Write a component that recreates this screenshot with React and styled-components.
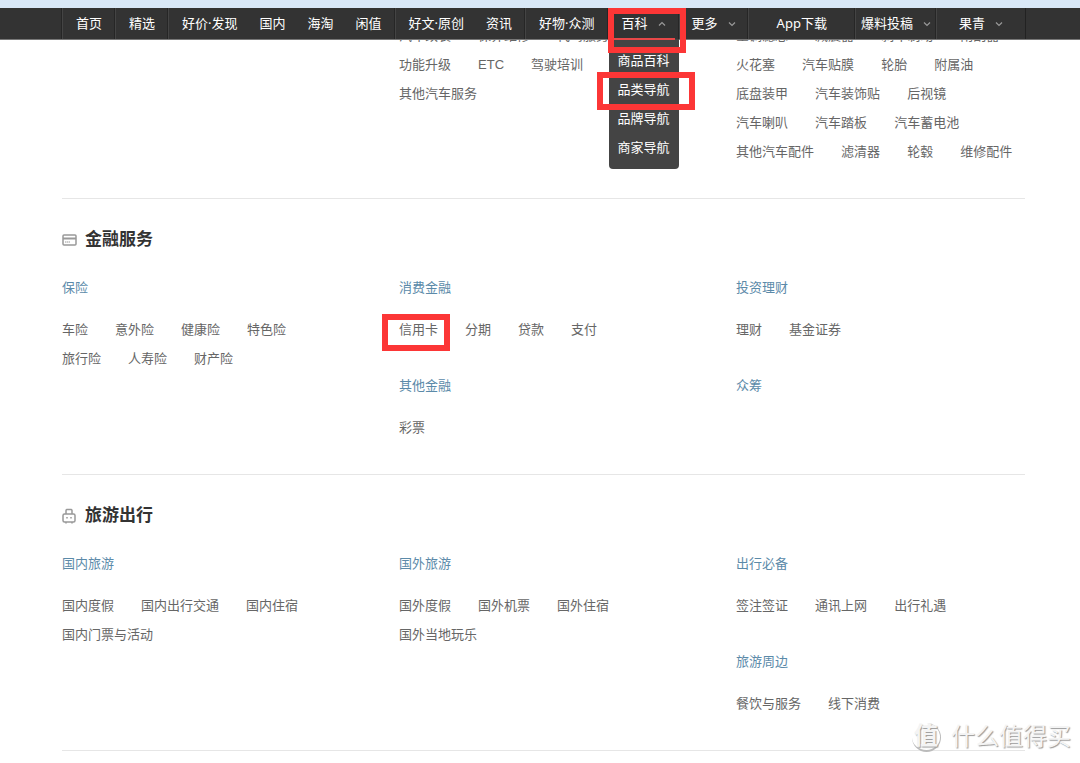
import React from 'react';
import styled, { createGlobalStyle } from 'styled-components';

const mainNav = [
  [{ label: '首页' }],
  [{ label: '精选' }],
  [{ label: '好价·发现' }, { label: '国内' }, { label: '海淘' }, { label: '闲值' }],
  [{ label: '好文·原创' }, { label: '资讯' }],
  [{ label: '好物·众测' }],
];

const wikiMenu = [
  { label: '商品百科' },
  { label: '品类导航', marked: true },
  { label: '品牌导航' },
  { label: '商家导航' },
];

const carColumns = [
  [],
  [{ rows: [['汽车改装', '保养维修', '代驾服务'], ['功能升级', 'ETC', '驾驶培训'], ['其他汽车服务']] }],
  [{
    rows: [
      ['空调滤芯', '减震器', '刹车制动', '雨刮器'],
      ['火花塞', '汽车贴膜', '轮胎', '附属油'],
      ['底盘装甲', '汽车装饰贴', '后视镜'],
      ['汽车喇叭', '汽车踏板', '汽车蓄电池'],
      ['其他汽车配件', '滤清器', '轮毂', '维修配件'],
    ],
  }],
];

const financeColumns = [
  [{ name: '保险', rows: [['车险', '意外险', '健康险', '特色险'], ['旅行险', '人寿险', '财产险']] }],
  [
    { name: '消费金融', rows: [['信用卡', '分期', '贷款', '支付']] },
    { name: '其他金融', rows: [['彩票']] },
  ],
  [
    { name: '投资理财', rows: [['理财', '基金证券']] },
    { name: '众筹', rows: [] },
  ],
];

const travelColumns = [
  [{ name: '国内旅游', rows: [['国内度假', '国内出行交通', '国内住宿'], ['国内门票与活动']] }],
  [{ name: '国外旅游', rows: [['国外度假', '国外机票', '国外住宿'], ['国外当地玩乐']] }],
  [
    { name: '出行必备', rows: [['签注签证', '通讯上网', '出行礼遇']] },
    { name: '旅游周边', rows: [['餐饮与服务', '线下消费']] },
  ],
];

const Chevron = ({ up }) => (
  <ChevronIcon viewBox="0 0 8 6" aria-hidden="true">
    <path d={up ? 'M1 4.5 L4 1.5 L7 4.5' : 'M1 1.5 L4 4.5 L7 1.5'} />
  </ChevronIcon>
);

const CardIcon = () => (
  <TitleIcon viewBox="0 0 15 16" aria-hidden="true">
    <rect x="1" y="3" width="13" height="10" rx="1" />
    <path d="M1 6.5 H14" strokeWidth="2" />
    <path d="M3 10 H4.5 M5 10 H6.5 M7 10 H8" strokeWidth="1" />
  </TitleIcon>
);

const LuggageIcon = () => (
  <TitleIcon viewBox="0 0 15 16" aria-hidden="true">
    <path d="M4 6 V2.5 Q4 1.5 5 1.5 H9 Q10 1.5 10 2.5 V6" />
    <rect x="1" y="6" width="12" height="8" rx="1.5" />
    <path d="M5 9 V10.5 M9 9 V10.5 M4 14 V15.5 M10 14 V15.5" />
  </TitleIcon>
);

const Columns = ({ columns }) => (
  <ColumnGrid>
    {columns.map((blocks, i) => (
      <div key={i}>
        {blocks.map((block, j) => (
          <Block key={j}>
            {block.name && <BlockTitle><a href="#">{block.name}</a></BlockTitle>}
            {block.rows.map((row) => (
              <LinkRow key={row[0]}>
                {row.map((label) => (
                  <LinkItem key={label}>
                    <a href="#">{label}</a>
                    {label === '信用卡' && <CardMark />}
                  </LinkItem>
                ))}
              </LinkRow>
            ))}
          </Block>
        ))}
      </div>
    ))}
  </ColumnGrid>
);

const App = () => (
  <Page>
    <GlobalStyle />
    <Header>
      <NavBar>
        {mainNav.map((group) => (
          <NavGroup key={group[0].label}>
            {group.map((item) => <NavLink key={item.label} href="#">{item.label}</NavLink>)}
          </NavGroup>
        ))}
        <WikiGroup>
          <NavLink href="#">百科<Chevron up /></NavLink>
          <Dropdown>
            {wikiMenu.map((item) => (
              <DropdownItem key={item.label}>
                <a href="#">{item.label}</a>
                {item.marked && <MenuMark />}
              </DropdownItem>
            ))}
          </Dropdown>
          <ActiveLine />
          <TabMark />
        </WikiGroup>
        <NavGroup $pad={12}><NavLink href="#">更多<Chevron /></NavLink></NavGroup>
        <NavGroup $pad={28}><NavLink href="#">App下载</NavLink></NavGroup>
        <NavGroup $pad={5}><NavLink href="#">爆料投稿<Chevron /></NavLink></NavGroup>
        <NavGroup $pad={22} $last><NavLink href="#">果青<Chevron /></NavLink></NavGroup>
      </NavBar>
    </Header>

    <Main>
      <Section>
        <Columns columns={carColumns} />
      </Section>
      <Section>
        <SectionTitle><CardIcon />金融服务</SectionTitle>
        <Columns columns={financeColumns} />
      </Section>
      <Section>
        <SectionTitle><LuggageIcon />旅游出行</SectionTitle>
        <Columns columns={travelColumns} />
      </Section>
    </Main>

    <Watermark>
      <WatermarkLogo>值</WatermarkLogo>
      什么值得买
    </Watermark>
  </Page>
);

const GlobalStyle = createGlobalStyle`
  * {
    box-sizing: border-box;
  }

  body {
    margin: 0;
    background-color: white;
    color: #666;
    font: 13px/29px "Liberation Sans", "Noto Sans CJK SC", sans-serif;
  }

  a {
    color: inherit;
    text-decoration: none;
  }

  ul {
    margin: 0;
    padding: 0;
    list-style: none;
  }
`;

const Page = styled.div`
  position: relative;
  min-height: 100vh;
`;

const Header = styled.header`
  position: relative;
  z-index: 2;
  padding: 0 55px 0 62px;
  background-color: #333;
  border-top: 8px solid #d9e8f7;
  border-bottom: 1px solid #777;
`;

const NavBar = styled.nav`
  display: flex;
  height: 31px;
  color: white;
  font-family: "Noto Sans", "Noto Sans CJK SC", sans-serif;
  white-space: nowrap;
`;

const NavGroup = styled.div`
  display: flex;
  align-items: center;
  gap: 22px;
  padding: 0 ${({ $pad = 13 }) => $pad}px;
  border-left: 1px solid #444;
  border-right: ${({ $last }) => ($last ? '1px solid #222' : 'none')};
  box-shadow: -1px 0 #262626;
`;

const WikiGroup = styled(NavGroup)`
  position: relative;
`;

const NavLink = styled.a`
  display: flex;
  align-items: center;
  gap: 10px;
`;

const ChevronIcon = styled.svg`
  width: 8px;
  height: 6px;
  fill: none;
  stroke: #999;
  stroke-width: 1.2;
`;

const Dropdown = styled.ul`
  position: absolute;
  top: 100%;
  left: 0;
  width: 100%;
  padding: 7px 0;
  background-color: #444;
  border-radius: 0 0 4px 4px;
  text-align: center;
`;

const DropdownItem = styled.li`
  position: relative;
`;

const ActiveLine = styled.div`
  position: absolute;
  left: 4px;
  right: 4px;
  bottom: -1px;
  height: 2px;
  background-color: #e84848;
`;

const Mark = styled.span`
  position: absolute;
  border: 6px solid #fc3636;
  pointer-events: none;
`;

const TabMark = styled(Mark)`
  inset: 0 -7px -14px -1px;
`;

const MenuMark = styled(Mark)`
  inset: -3px -16px -6px -12px;
`;

const CardMark = styled(Mark)`
  inset: -1px -12px -7px -17px;
`;

/* the page is scrolled, so the first row of links runs under the header */
const Main = styled.main`
  margin: -19px 55px 0 62px;
`;

const Section = styled.section`
  padding-bottom: 2px;
  border-bottom: 1px solid #e6e6e6;
`;

const SectionTitle = styled.h2`
  display: flex;
  align-items: center;
  gap: 8px;
  margin: 0 0 22px;
  padding-top: 27px;
  color: #333;
  font-size: 17px;
  line-height: 28px;
`;

const TitleIcon = styled.svg`
  width: 15px;
  height: 16px;
  fill: none;
  stroke: #999;
  stroke-width: 1.5;
`;

const ColumnGrid = styled.div`
  display: grid;
  grid-template-columns: 35fr 35fr 30fr;
`;

const Block = styled.div`
  margin-bottom: 30px;
`;

const BlockTitle = styled.h3`
  margin: 0 0 15px;
  color: #5b8aa9;
  font-size: 13px;
  font-weight: normal;
  line-height: 24px;
`;

const LinkRow = styled.ul`
  display: flex;
  gap: 27px;
  white-space: nowrap;
`;

const LinkItem = styled.li`
  position: relative;
`;

const Watermark = styled.div`
  position: absolute;
  right: 9px;
  bottom: 11px;
  display: flex;
  align-items: center;
  gap: 10px;
  color: #f4f4f4;
  font-size: 24px;
  line-height: 30px;
  text-shadow: 1px 1px 1px #999;
`;

const WatermarkLogo = styled.span`
  width: 29px;
  height: 29px;
  border-right: 1px solid #bbb;
  border-bottom: 2px solid #bbb;
  border-radius: 50%;
  font-size: 24px;
  font-weight: bold;
  line-height: 26px;
  text-align: center;
`;

export default App;
